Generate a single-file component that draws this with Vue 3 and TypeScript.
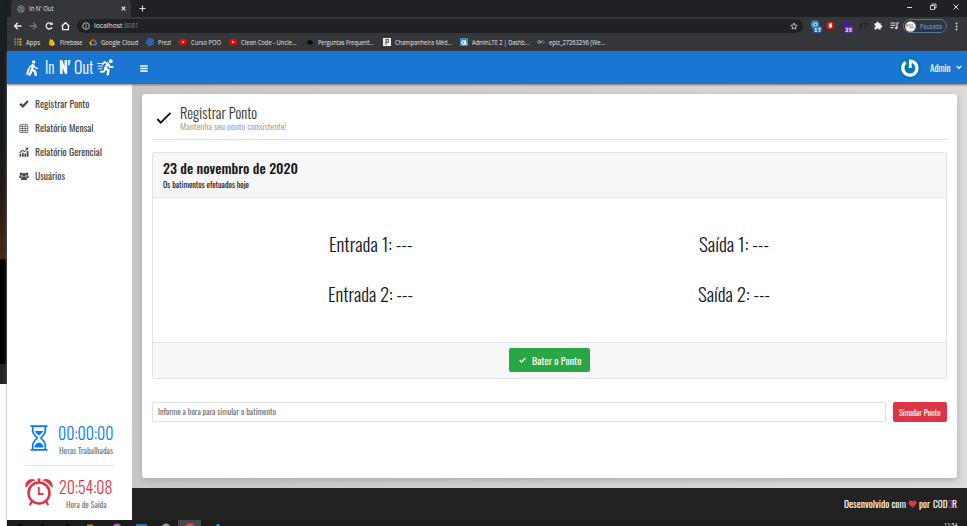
<script setup lang="ts">
import { h, type FunctionalComponent } from 'vue'

interface FitProps { t: string; w: number; s: number }

// Single line of text set to an exact width, centred on the font's cap height.
function fitted(cap: number): FunctionalComponent<FitProps> {
  const Line: FunctionalComponent<FitProps> = (p) => {
    const box = Math.ceil(p.s * 1.4)
    return h('svg', { class: 'fit', width: p.w, height: box }, [
      h('text', {
        x: 0,
        y: box / 2 + (p.s * cap) / 2,
        'font-size': p.s,
        fill: 'currentColor',
        textLength: p.w,
        lengthAdjust: 'spacingAndGlyphs',
      }, p.t),
    ])
  }
  Line.props = ['t', 'w', 's']
  return Line
}
const Fit = fitted(0.8)
const Ui = fitted(0.715)

interface Bookmark { icon: string; label: string; w: number; cell: number }
const bookmarks: Bookmark[] = [
  { icon: 'apps', label: 'Apps', w: 14, cell: 33.5 },
  { icon: 'fire', label: 'Firebase', w: 22.5, cell: 41.5 },
  { icon: 'cloud', label: 'Google Cloud', w: 37, cell: 57 },
  { icon: 'prezi', label: 'Prezi', w: 13, cell: 33 },
  { icon: 'yt', label: 'Curso POO', w: 30, cell: 49.5 },
  { icon: 'yt', label: 'Clean Code - Uncle...', w: 55.5, cell: 77 },
  { icon: 'blob', label: 'Perguntas Frequent...', w: 56, cell: 77 },
  { icon: 'page', label: 'Champanheira Méd...', w: 57, cell: 77 },
  { icon: 'lte', label: 'AdminLTE 2 | Dashb...', w: 57, cell: 77 },
  { icon: 'loop', label: 'epiz_27263296 (We...', w: 56, cell: 77 },
]

const menu = [
  { icon: 'check', label: 'Registrar Ponto', w: 54.5 },
  { icon: 'calendar', label: 'Relatório Mensal', w: 58.5 },
  { icon: 'chart', label: 'Relatório Gerencial', w: 67 },
  { icon: 'users', label: 'Usuários', w: 30 },
]

const punches = [
  { label: 'Entrada 1: ---', w: 83.5 },
  { label: 'Saída 1: ---', w: 70 },
  { label: 'Entrada 2: ---', w: 85 },
  { label: 'Saída 2: ---', w: 72 },
]

const appDots = ['#e8453c', '#e8453c', '#f4b400', '#34a853', '#4285f4', '#f4b400', '#34a853', '#34a853', '#f4b400']
</script>

<template>
  <div class="screen">
    <div class="desktop"><div class="wall"></div><div class="dark"></div><div class="bar"></div></div>
    <div class="window">
      <div class="tabs">
        <div class="tab">
          <svg class="globe" width="8" height="8" viewBox="0 0 8 8"><circle cx="4" cy="4" r="3.7" fill="#75787c" /><path d="M1 2.5 3 3.5 2.5 5 4 7M4 1l2 1-1 2 2 1" stroke="#45464a" fill="none" /></svg>
          <Ui t="In N' Out" :w="24.5" :s="6.4" />
          <svg class="close" width="5" height="5" viewBox="0 0 5 5"><path d="m.7.7 3.6 3.6M4.3.7.7 4.3" stroke="#eee" stroke-width="1.1" /></svg>
        </div>
        <svg class="plus" width="7" height="7" viewBox="0 0 7 7"><path d="M3.5.5v6M.5 3.5h6" stroke="#ddd" stroke-width="1.1" /></svg>
        <svg class="controls" width="54" height="8" viewBox="0 0 54 8" fill="none" stroke="#ddd"><path d="M1 4.5h5" /><path d="M24.5 2.5h4v4h-4zM26 2.5V1h4v4h-1.5" stroke-width=".9" /><path d="m47.5 1.5 5 5m0-5-5 5" /></svg>
      </div>
      <div class="toolbar">
        <svg class="nav" width="58" height="10" viewBox="0 0 58 10" fill="none" stroke="#eee" stroke-width="1.3">
          <path d="M8.500 5H1.800M4.800 1.800 1.600 5l3.200 3.200" />
          <path d="M16.500 5h6.700M20.200 1.800 23.400 5l-3.200 3.200" stroke="#77797d" />
          <path d="M38.600 2.800A3.100 3.100 0 1 0 39 6.400" /><path d="M39.600 1v3h-3z" fill="#eee" stroke="none" />
          <path d="M49.600 5v3.600h5.800V5M48.600 5.300l3.900-3.600 3.900 3.600" />
        </svg>
        <div class="address">
          <svg class="info" width="8" height="8" viewBox="0 0 8 8"><circle cx="4" cy="4" r="3.300" fill="none" stroke="#ccc" stroke-width=".9" /><path d="M4 3.500V6M4 2v.9" stroke="#ccc" stroke-width=".9" /></svg>
          <Ui class="host" t="localhost" :w="28.5" :s="6.8" />
          <Ui class="port" t=":8081" :w="15.5" :s="6.8" />
          <svg class="star" width="8" height="8" viewBox="0 0 8 8"><path d="m4 .9.900 2.200 2.300.2-1.800 1.500.6 2.300L4 5.900 2 7.100l.6-2.300L.8 3.300l2.300-.2z" fill="none" stroke="#ddd" stroke-width=".8" /></svg>
        </div>
        <svg class="extensions" width="90" height="14" viewBox="0 0 90 14">
          <circle cx="5" cy="5.500" r="4" fill="#2aa0d6" /><circle cx="5.300" cy="5.500" r="1.800" fill="#fff" /><circle cx="5.500" cy="5.500" r=".9" fill="#333" />
          <rect x="3.500" y="7.500" width="8" height="6" rx=".8" fill="#2f7de1" /><text x="4.300" y="12.500" font-size="5" font-weight="700" fill="#fff" textLength="6.400">17</text>
          <path d="M18.500 2.500h3.500l2 2v4l-2 2h-3.500l-2-2v-4z" fill="#e80a0a" /><path d="M18.800 5.500h3.200v2l-1 1.500h-1.300l-1-1.500zM19.500 4h2v2h-2z" fill="#fff" />
          <path d="m36 2 3 2.500 2 1-1.500 3.500h-6L32 5.500l2-.5z" fill="#4815a8" />
          <rect x="34.700" y="7.500" width="8" height="6" rx=".8" fill="#7133c4" /><text x="35.500" y="12.500" font-size="5" font-weight="700" fill="#fff" textLength="6.400">25</text>
          <text x="48.500" y="10" font-size="9" font-style="italic" fill="#101112" font-family="Liberation Serif">ƒ?</text>
          <path d="M64.500 4.300h2c-.6-2.100 2.800-2.100 2.200 0h2v2.100c2.100-.6 2.100 2.700 0 2.100v2h-2.300c.3-1.600-1.900-1.600-1.600 0h-2.300V8.300c1.600.3 1.600-2 0-1.700z" fill="#f1f1f1" />
          <path d="M80.500 4h5M80.500 6.300h5M80.500 8.600h3M87 9V4h1.800" stroke="#ddd" stroke-width="1.1" fill="none" /><circle cx="86.200" cy="9" r="1.200" fill="#ddd" />
        </svg>
        <div class="profile">
          <svg width="11" height="11" viewBox="0 0 11 11"><circle cx="5.500" cy="5.500" r="5.300" fill="#eee" /><path d="M3 4h5M4 6.300h5" stroke="#999" stroke-width="1" /><circle cx="2" cy="4.500" r="1.200" fill="#d5a21b" /></svg>
          <Ui t="Pausada" :w="22" :s="6.2" />
        </div>
        <svg class="dots" width="3" height="9" viewBox="0 0 3 9" fill="#ddd"><circle cx="1.500" cy="1.500" r=".9" /><circle cx="1.500" cy="4.500" r=".9" /><circle cx="1.500" cy="7.500" r=".9" /></svg>
      </div>
      <div class="bookmarks">
        <div v-for="b in bookmarks" :key="b.label" class="bookmark" :style="{ width: b.cell + 'px' }">
          <svg class="mark" width="8" height="8" viewBox="0 0 8 8">
            <template v-if="b.icon === 'apps'"><rect v-for="(c, i) in appDots" :key="i" :x="(i % 3) * 2.6 + 0.3" :y="Math.floor(i / 3) * 2.6 + 0.3" width="1.8" height="1.8" :fill="c" /></template>
            <template v-else-if="b.icon === 'fire'"><path d="M1 6.500 2 .5l1.500 2L4.500 1 7 6.500 4 8z" fill="#ffca28" /><path d="m1 6.500 3-4 .8 2.500L4 8z" fill="#f59b0b" /></template>
            <template v-else-if="b.icon === 'cloud'"><path d="M2 4a2.200 2.200 0 0 1 4-1" stroke="#ea4335" stroke-width="1.6" fill="none" /><path d="M6 3q1.600 1.500.8 3.500L4.500 6.800" stroke="#4285f4" stroke-width="1.6" fill="none" /><path d="M4.500 6.800H2" stroke="#34a853" stroke-width="1.5" /><path d="M2.400 6.800Q0 5 2 3.800" stroke="#fbbc05" stroke-width="1.5" fill="none" /></template>
            <circle v-else-if="b.icon === 'prezi'" cx="4" cy="4" r="3.900" fill="#315fa8" />
            <template v-else-if="b.icon === 'yt'"><rect x=".3" y="1.200" width="7.400" height="5.600" rx="1.200" fill="#f00" /><path d="m3.200 2.800 2.200 1.200-2.200 1.200z" fill="#fff" /></template>
            <path v-else-if="b.icon === 'blob'" d="M1 4q1-2 3-1.800 2 0 3.200 2Q7 6.500 4 6.600 1 6.300 1 4z" fill="#08090a" />
            <template v-else-if="b.icon === 'page'"><rect width="8" height="8" fill="#f1f1f1" /><path d="M3 7V1.500h2.300v2.600H3" stroke="#555" stroke-width="1.1" fill="none" /></template>
            <template v-else-if="b.icon === 'lte'"><rect width="8" height="8" fill="#3c8dbc" /><circle cx="3.500" cy="4.500" r="1.600" fill="none" stroke="#fff" stroke-width="1.2" /><path d="m5.500 2-.5 4 2-.4" stroke="#fff" stroke-width="1.2" fill="none" /></template>
            <template v-else><circle cx="2.200" cy="4" r="1.400" fill="none" stroke="#8bc34a" stroke-width="1" /><circle cx="5.800" cy="4" r="1.400" fill="none" stroke="#8e44c9" stroke-width="1" /><path d="m3.200 5 1.600-2" stroke="#25b5d4" /></template>
          </svg>
          <Ui :t="b.label" :w="b.w" :s="6.4" />
        </div>
      </div>

      <header class="header">
        <div class="logo">
          <svg width="13" height="16" viewBox="0 0 13 16" fill="none" stroke="#fff" stroke-linecap="round" stroke-linejoin="round"><circle cx="7.700" cy="1.900" r="1.700" fill="#fff" stroke="none" /><path d="M6.900 5.200 6 9.500l3 2 .7 3.300" stroke-width="2.500" /><path d="m6 9.500-1.200 3L3.500 14.800" stroke-width="2.200" /><path d="M6.700 4.800 4 6.500l-.8 2.200M7.500 5l1.500 2.500 2.500.8" stroke-width="1.4" /><path d="M2.600 9.500 1.200 14" stroke-width="2" /></svg>
          <Fit class="light in" t="In" :w="9.5" :s="16.2" />
          <Fit class="bold" t="N'" :w="11.5" :s="16.2" />
          <Fit class="light out" t="Out" :w="19.5" :s="16.2" />
          <svg width="17" height="17" viewBox="0 0 17 17" fill="none" stroke="#fff" stroke-linecap="round" stroke-linejoin="round"><circle cx="13.800" cy="2.200" r="1.900" fill="#fff" stroke="none" /><path d="m10.700 5-2.500 4.300 3.300 2-.8 4" stroke-width="2.5" /><path d="M8.300 10.300 7 12.500l-3.300.3M10.500 4.300 7.500 3 5.800 5M11.500 5.500l1.500 2.700 2.800-.3" stroke-width="1.8" /><path d="M.6 4.500h4M1 7.200h4.500M1.500 9.800H5" stroke-width=".9" /></svg>
        </div>
        <svg class="burger" width="8" height="7" viewBox="0 0 8 7"><path d="M.2 1h7.500M.2 3.500h7.500M.2 6h7.500" stroke="#fff" stroke-width="1.5" /></svg>
        <div class="user">
          <svg width="22" height="22" viewBox="0 0 22 22"><circle cx="11" cy="11" r="11" fill="#0877b5" /><path d="M6.700 5.300A7.100 7.100 0 1 0 12.500 4.100" stroke="#fff" stroke-width="3.2" fill="none" /><path d="M11.300 2.500v8.500" stroke="#fff" stroke-width="2.8" /></svg>
          <Fit t="Admin" :w="20.500" :s="9.900" />
          <svg class="chev" width="6" height="5" viewBox="0 0 6 5"><path d="m.7 1 2.300 2.400L5.300 1" fill="none" stroke="#fff" stroke-width="1.3" /></svg>
        </div>
      </header>

      <div class="page">
        <aside class="side">
          <nav>
            <a v-for="m in menu" :key="m.label" class="item">
              <svg width="10" height="10" viewBox="0 0 10 10" fill="#484848">
                <path v-if="m.icon === 'check'" d="M.3 5.700 2 4l1.900 1.800L8.200 1.200l1.500 1.500L4 8.900z" />
                <path v-else-if="m.icon === 'calendar'" d="M.8 1.800h8v7.700h-8zM3 .4v2M6.700.4v2M.8 3.500h8M1 5.500h8M1 7.500h8M3.500 4v5.500M6.200 4v5.500" fill="none" stroke="#555" stroke-width=".7" />
                <path v-else-if="m.icon === 'chart'" d="M.5 7h1.800v2.700H.5zM3 5.700h1.700v4H3zM5.400 6.500h1.700v3.200H5.400zM7.700 4h1.800v5.700H7.700zM.3 5.500 3.300 2.600l2 1.500 2-2L6.300 1l3-.7-.3 3-1-.7-2.600 2.700-2-1.500L1.200 6.500z" />
                <template v-else><circle cx="5" cy="3.700" r="1.900" /><circle cx="2" cy="2.900" r="1.300" /><circle cx="8" cy="2.900" r="1.300" /><path d="M2 9q-.2-3.500 2-3.500h2q2.200 0 2 3.500zM0 6.800q0-2.500 1.500-2.500h1.300Q3 5.500 1.700 6.900zM10 6.800q0-2.500-1.500-2.500H7.200Q7 5.500 8.300 6.900z" /></template>
              </svg>
              <Fit :t="m.label" :w="m.w" :s="10" />
            </a>
          </nav>
          <div class="stats">
            <div class="stat blue">
              <svg width="28" height="26" viewBox="0 0 28 26" fill="none" stroke="#007bff" stroke-width="1.7"><path d="M5.500 1.200h17M5.500 24.800h17M7.700 1.200v4.500q0 2.800 4.500 7.300-4.500 4.500-4.500 7.300v4.500M20.300 1.200v4.500q0 2.800-4.500 7.300 4.500 4.500 4.500 7.300v4.500" /><path d="M9.800 6h8.400q-1 2.700-4.200 4.500Q10.800 8.700 9.800 6zM9.600 22.500v-1.800q2-3.200 4.400-3.200t4.400 3.200v1.800z" fill="#007bff" stroke="none" /></svg>
              <div class="info-col"><Fit class="time" t="00:00:00" :w="55.500" :s="16.200" /><Fit class="cap" t="Horas Trabalhadas" :w="54" :s="8.900" /></div>
            </div>
            <div class="stat red">
              <svg width="28" height="28" viewBox="0 0 28 28" fill="none" stroke="#dc3545"><circle cx="14" cy="15" r="10.500" stroke-width="2.5" /><path d="M13.800 9v7h4.700" stroke-width="1.800" /><path d="M.8 10C-1.500 4 5.500-1.500 10.500 2.300Q4.500 4.500.8 10zM27.200 10C29.500 4 22.500-1.500 17.500 2.300q6 2.200 9.700 7.700z" fill="#dc3545" stroke="none" /><path d="M14 1.500V4M12.500 1.500h3M7 23l-2.200 4.300M21 23l2.200 4.300" stroke-width="2.200" /></svg>
              <div class="info-col"><Fit class="time" t="20:54:08" :w="53.500" :s="16.200" /><Fit class="cap" t="Hora de Saída" :w="40.500" :s="8.900" /></div>
            </div>
          </div>
        </aside>

        <div class="main">
          <main class="content">
            <section class="sheet">
              <div class="title">
                <svg width="16" height="13" viewBox="0 0 16 13"><path d="m1.300 7 3.400 3.600L14.500.9" fill="none" stroke="#111" stroke-width="1.9" /></svg>
                <div><Fit class="t1" t="Registrar Ponto" :w="77" :s="15" /><Fit class="t2" t="Mantenha seu ponto consistente!" :w="106.500" :s="9" /></div>
              </div>
              <div class="card">
                <div class="card-head"><Fit class="date" t="23 de novembro de 2020" :w="135" :s="14" /><Fit class="sub" t="Os batimentos efetuados hoje" :w="86" :s="8.100" /></div>
                <div class="card-body"><Fit v-for="p in punches" :key="p.label" :t="p.label" :w="p.w" :s="18.300" /></div>
                <div class="card-foot">
                  <button class="punch"><svg width="7" height="6" viewBox="0 0 7 6"><path d="m.6 3 2 2L6.400 1" fill="none" stroke="#fff" stroke-width="1.3" /></svg><Fit t="Bater o Ponto" :w="49.500" :s="10.400" /></button>
                </div>
              </div>
              <div class="form">
                <div class="field"><Fit t="Informe a hora para simular o batimento" :w="118" :s="8.400" /></div>
                <button class="simulate"><Fit t="Simular Ponto" :w="41.500" :s="8.600" /></button>
              </div>
            </section>
          </main>
          <footer class="footer">
            <Fit t="Desenvolvido com" :w="62" :s="9.200" />
            <svg class="heart" width="9" height="8" viewBox="0 0 9 8"><path d="M4.500 7.800 1 4.500C-1 2 2.200-1 4.500 1.400 6.800-1 10 2 8 4.500z" fill="#dc3545" /></svg>
            <Fit t="por" :w="11" :s="9.200" />
            <Fit class="cod" t="COD" :w="14.500" :s="9.200" /><Fit class="three" t="3" :w="4.500" :s="9.200" /><Fit t="R" :w="5" :s="9.200" />
          </footer>
        </div>
      </div>
      <div class="taskbar">
        <svg width="220" height="6" viewBox="0 0 220 6"><rect x="171" width="23" height="6" fill="#484848" /><path d="M10 5h5M34 5h3M59 5h3" stroke="#0a0a0a" stroke-width="2" /><rect x="80" y="4.500" width="6" height="2" fill="#a9811f" /><circle cx="110" cy="8.300" r="4.800" fill="#a865b5" /><rect x="129" y="4" width="11" height="2" fill="#2f6ca5" /><circle cx="159" cy="8.300" r="4.800" fill="#999" /><circle cx="183" cy="8.300" r="5" fill="#d64a3c" /><path d="m211 3.500 3 3h-6z" fill="#17a7e0" /></svg>
        <Ui class="clock" t="12:54" :w="13.500" :s="6" />
      </div>
    </div>
  </div>
</template>

<style>
body { margin: 0; overflow: hidden; }
</style>

<style scoped>
* { box-sizing: border-box; }
.fit { display: block; flex: none; overflow: visible; }
.screen { width: 967px; height: 526px; display: flex; overflow: hidden; background: #fff; font-family: Oswald, 'Roboto Condensed', 'Liberation Sans Narrow', Roboto, sans-serif; font-weight: 370; }
.desktop { width: 7px; height: 526px; display: flex; flex-direction: column; border-right: 1px solid #e6e6e6; border-image: linear-gradient(#1a1a1a 73%, #e8e8e8 73%) 1; }
.wall { height: 259px; background: linear-gradient(#1c2126 0%, #15191e 50%, #241b14 75%, #4a2810 100%); }
.dark { height: 105px; background: #020202; }
.bar { height: 20px; background: #242424; }
.window { width: 960px; height: 526px; display: flex; flex-direction: column; }
.tabs, .toolbar, .bookmarks { font-family: 'Open Sans', 'Noto Sans', sans-serif; font-weight: 400; color: #e4e5e7; flex: none; }
.tabs { height: 17px; background: #202124; display: flex; align-items: center; padding: 0 7px 0 4px; }
.tab { width: 120px; height: 17px; background: #35363a; border-radius: 4px 4px 0 0; display: flex; align-items: center; padding: 0 5px 0 6px; gap: 4px; }
.close { margin-left: auto; }
.plus { margin-left: 7.5px; }
.controls { margin-left: auto; margin-top: -3px; }
.toolbar { height: 17px; background: #35363a; display: flex; align-items: center; padding-top: 1px; }
.nav { margin-left: 6px; }
.address { width: 726px; height: 14px; margin-left: 6px; background: #202124; border-radius: 7px; display: flex; align-items: center; padding: 0 5px 0 5px; }
.host { margin-left: 4px; }
.port { color: #85878b; margin-left: .5px; }
.star { margin-left: auto; }
.extensions { margin-left: 7px; font-family: 'Liberation Sans', sans-serif; }
.profile { width: 44px; height: 14px; margin-left: 3px; border: 1px solid #53739f; border-radius: 7px; display: flex; align-items: center; gap: 4px; padding-left: 1px; color: #7fa6dd; background: #2e3440; }
.dots { margin-left: 8px; }
.bookmarks { height: 17px; background: #35363a; display: flex; align-items: center; padding: 0 0 1px 7px; }
.bookmark { display: flex; align-items: center; gap: 4px; flex: none; }
.mark { flex: none; }
.header { height: 33px; flex: none; background: #1976d2; display: flex; align-items: center; color: #fff; padding: 0 5px 0 19px; box-shadow: 0 1px 2px #8a7060; position: relative; z-index: 1; }
.logo { display: flex; align-items: center; width: 89px; }
.logo .in { margin-left: 6px; }
.logo .bold { margin-left: 4px; }
.logo .out { margin: 0 3.5px 0 4px; }
.light { font-weight: 300; }
.bold { font-weight: 700; }
.burger { margin: 1px 0 0 25px; }
.user { margin-left: auto; display: flex; align-items: center; }
.user > :nth-child(2) { margin-left: 9px; }
.chev { margin-left: 6px; }
.page { height: 436px; flex: none; display: flex; }
.side { width: 125px; background: #fff; display: flex; flex-direction: column; justify-content: space-between; box-shadow: 1px 0 4px #aaa; }
nav { padding: 8px 0 0 12px; }
.item { height: 24px; display: flex; align-items: center; gap: 6px; color: #484848; }
.stats { width: 89px; margin-left: 18px; height: 105px; }
.stat { display: flex; align-items: center; }
.stat > svg { flex: none; }
.blue { height: 51px; border-bottom: 1px solid #e2e4e6; padding-bottom: 5px; color: #007bff; }
.red { height: 54px; color: #dc3545; padding-bottom: 3px; }
.info-col { width: 61px; padding: 4px 0 0 5px; display: flex; flex-direction: column; align-items: center; }
.time { font-weight: 330; }
.cap { color: #737b82; margin-top: -1.5px; }
.main { width: 835px; display: flex; flex-direction: column; }
.content { height: 404px; padding: 10px; background: linear-gradient(90deg, #c8c8c8, #dcdcdc); }
.sheet { height: 384px; background: #fff; border-radius: 3px; padding: 0 10px; box-shadow: 0 2px 7px #aaa; }
.title { height: 46px; border-bottom: 1px solid #ddd; display: flex; padding-left: 4px; }
.title > svg { margin-top: 18px; }
.title > div { margin-left: 8px; padding-top: 8px; }
.t1 { color: #333; font-weight: 300; }
.t2 { color: #949494; margin-top: -3px; font-weight: 300; }
.card { margin-top: 12px; height: 227px; border: 1px solid #e2e2e2; border-radius: 2px; color: #16191c; }
.card-head { height: 45px; background: #f7f7f7; border-bottom: 1px solid #e2e2e2; padding: 5px 0 0 9.5px; }
.date { font-weight: 470; }
.sub { margin-top: 1px; }
.card-body { height: 144px; padding: 22px 30px 22px 36px; display: grid; grid-template-columns: 1fr 1fr; place-items: center; font-weight: 350; }
.card-foot { height: 36px; background: #f7f7f7; border-top: 1px solid #e2e2e2; display: flex; align-items: center; justify-content: center; padding-bottom: 1px; }
button { border: 0; margin: 0; color: #fff; font-family: inherit; font-weight: 400; border-radius: 2px; display: flex; align-items: center; }
.punch { width: 81px; height: 24px; background: #28a745; padding: 0 0 0 10px; gap: 6px; }
.form { margin-top: 23px; display: flex; justify-content: space-between; }
.field { width: 734px; height: 20px; border: 1px solid #dfe2e6; border-radius: 2px; display: flex; align-items: center; padding-left: 5px; color: #6c757d; }
.simulate { width: 54px; height: 20px; background: #dc3545; justify-content: center; padding: 0; }
.footer { height: 32px; background: #222; color: #fff; display: flex; align-items: center; justify-content: flex-end; padding-right: 10px; font-weight: 400; }
.heart { margin: 0 2px 0 2.5px; }
.cod { margin-left: 3px; }
.three { color: #dc3545; }
.taskbar { height: 6px; flex: none; background: #1b1c1c; overflow: hidden; display: flex; justify-content: space-between; align-items: flex-start; padding-right: 10px; color: #eee; font-family: 'Open Sans', sans-serif; }
</style>
